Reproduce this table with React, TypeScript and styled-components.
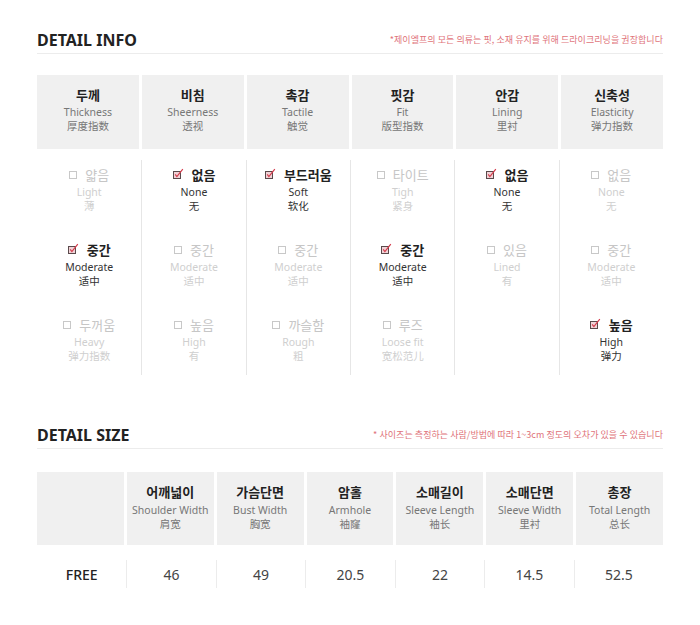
import React from "react";
import styled, { createGlobalStyle } from "styled-components";

const Global = createGlobalStyle`
  html, body { margin: 0; padding: 0; background: #fff; }
  body { font-family: "Noto Sans", "Noto Sans CJK KR", sans-serif; color: #222; }
`;

const Page = styled.div`
  width: 626px;
  padding: 30px 37px 0;
`;

const Section = styled.section<{ $top?: number }>`
  margin-top: ${(p) => p.$top ?? 0}px;
`;

const TitleRow = styled.div`
  display: flex;
  justify-content: space-between;
  align-items: center;
  padding-bottom: 3px;
  border-bottom: 1px solid #ececec;
`;

const Title = styled.h2`
  margin: 0;
  font-family: "Noto Sans", sans-serif;
  font-size: 16px;
  line-height: 20px;
  font-weight: 700;
  color: #222;
`;

const Note = styled.span`
  font-family: "Noto Sans CJK KR", "Noto Sans", sans-serif;
  font-size: 9px;
  letter-spacing: 0.05px;
  color: #e0737a;
  line-height: 12px;
`;

const HeadGrid = styled.div<{ $cols: number; $top: number; $h: number }>`
  display: grid;
  grid-template-columns: repeat(${(p) => p.$cols}, 1fr);
  column-gap: 3px;
  margin-top: ${(p) => p.$top}px;
  height: ${(p) => p.$h}px;
`;

const HeadCell = styled.div<{ $pt: number }>`
  background: #f0f0f0;
  display: flex;
  flex-direction: column;
  align-items: center;
  padding-top: ${(p) => p.$pt}px;
`;

const HeadKo = styled.div`
  font-family: "Noto Sans CJK KR", sans-serif;
  font-size: 13px;
  font-weight: 700;
  line-height: 18px;
  color: #222;
`;

const HeadEn = styled.div<{ $mt: number }>`
  font-family: "Noto Sans", sans-serif;
  font-size: 10.5px;
  line-height: 14px;
  margin-top: ${(p) => p.$mt}px;
  color: #777;
`;

const HeadZh = styled.div`
  font-family: "Noto Sans CJK SC", sans-serif;
  font-size: 10.5px;
  line-height: 14px;
  color: #777;
`;

const BodyGrid = styled.div`
  display: grid;
  grid-template-columns: repeat(6, 1fr);
  margin-top: 11px;
`;

const Column = styled.div`
  display: flex;
  flex-direction: column;
  align-items: center;
  gap: 29px;
  padding: 6px 0 13px;
  & + & { border-left: 1px solid #e6e6e6; }
`;

const Option = styled.div`
  height: 46px;
  display: flex;
  flex-direction: column;
  align-items: center;
`;

const OptKo = styled.div<{ $on: boolean }>`
  display: flex;
  align-items: center;
  gap: 8px;
  font-family: "Noto Sans CJK KR", sans-serif;
  font-size: 13px;
  line-height: 18px;
  font-weight: ${(p) => (p.$on ? 700 : 400)};
  color: ${(p) => (p.$on ? "#222" : "#c6c6c6")};
`;

const OptEn = styled.div<{ $on: boolean }>`
  font-family: "Noto Sans", sans-serif;
  font-size: 10.5px;
  line-height: 13px;
  margin-top: 2px;
  color: ${(p) => (p.$on ? "#333" : "#cfcfcf")};
`;

const OptZh = styled.div<{ $on: boolean }>`
  font-family: "Noto Sans CJK SC", sans-serif;
  font-size: 10.5px;
  line-height: 13px;
  color: ${(p) => (p.$on ? "#333" : "#cfcfcf")};
`;

const EmptyBox = styled.span`
  width: 6px;
  height: 6px;
  border: 1px solid #c8c8c8;
  display: inline-block;
`;

const CheckSvg = styled.svg`
  display: block;
  margin-top: -3px;
`;

const Checked = () => (
  <CheckSvg width="11" height="11" viewBox="0 0 11 11">
    <rect x="0.5" y="3.5" width="7" height="7" fill="#f1d3d7" stroke="#5a4a4c" />
    <path d="M2.2 6.3 L3.9 8.6 L9.8 1.2" fill="none" stroke="#d43c4c" strokeWidth="1.2" />
  </CheckSvg>
);

const DataGrid = styled.div`
  display: grid;
  grid-template-columns: repeat(7, 1fr);
  margin-top: 15px;
`;

const DataCell = styled.div<{ $strong?: boolean }>`
  height: 28px;
  display: flex;
  align-items: center;
  justify-content: center;
  font-family: "Noto Sans", sans-serif;
  font-size: 14px;
  font-weight: ${(p) => (p.$strong ? 500 : 400)};
  color: ${(p) => (p.$strong ? "#222" : "#444")};
  & + & { border-left: 1px solid #ececec; }
`;

type Opt = { ko: string; en: string; zh: string; on?: boolean } | null;

const infoHeads = [
  ["두께", "Thickness", "厚度指数"],
  ["비침", "Sheerness", "透视"],
  ["촉감", "Tactile", "触觉"],
  ["핏감", "Fit", "版型指数"],
  ["안감", "Lining", "里衬"],
  ["신축성", "Elasticity", "弹力指数"],
];

const infoCols: Opt[][] = [
  [
    { ko: "얇음", en: "Light", zh: "薄" },
    { ko: "중간", en: "Moderate", zh: "适中", on: true },
    { ko: "두꺼움", en: "Heavy", zh: "弹力指数" },
  ],
  [
    { ko: "없음", en: "None", zh: "无", on: true },
    { ko: "중간", en: "Moderate", zh: "适中" },
    { ko: "높음", en: "High", zh: "有" },
  ],
  [
    { ko: "부드러움", en: "Soft", zh: "软化", on: true },
    { ko: "중간", en: "Moderate", zh: "适中" },
    { ko: "까슬함", en: "Rough", zh: "粗" },
  ],
  [
    { ko: "타이트", en: "Tigh", zh: "紧身" },
    { ko: "중간", en: "Moderate", zh: "适中", on: true },
    { ko: "루즈", en: "Loose fit", zh: "宽松范儿" },
  ],
  [
    { ko: "없음", en: "None", zh: "无", on: true },
    { ko: "있음", en: "Lined", zh: "有" },
    null,
  ],
  [
    { ko: "없음", en: "None", zh: "无" },
    { ko: "중간", en: "Moderate", zh: "适中" },
    { ko: "높음", en: "High", zh: "弹力", on: true },
  ],
];

const sizeHeads = [
  ["어깨넓이", "Shoulder Width", "肩宽"],
  ["가슴단면", "Bust Width", "胸宽"],
  ["암홀", "Armhole", "袖窿"],
  ["소매길이", "Sleeve Length", "袖长"],
  ["소매단면", "Sleeve Width", "里衬"],
  ["총장", "Total Length", "总长"],
];

const sizeData = ["46", "49", "20.5", "22", "14.5", "52.5"];

export default function App() {
  return (
    <>
      <Global />
      <Page>
        <Section>
          <TitleRow>
            <Title>DETAIL INFO</Title>
            <Note>*제이엘프의 모든 의류는 핏, 소재 유지를 위해 드라이크리닝을 권장합니다</Note>
          </TitleRow>
          <HeadGrid $cols={6} $top={21} $h={74}>
            {infoHeads.map(([ko, en, zh]) => (
              <HeadCell key={en} $pt={11}>
                <HeadKo>{ko}</HeadKo>
                <HeadEn $mt={1}>{en}</HeadEn>
                <HeadZh>{zh}</HeadZh>
              </HeadCell>
            ))}
          </HeadGrid>
          <BodyGrid>
            {infoCols.map((col, i) => (
              <Column key={i}>
                {col.map((o, j) => (
                  <Option key={j}>
                    {o && (
                      <>
                        <OptKo $on={!!o.on}>
                          {o.on ? <Checked /> : <EmptyBox />}
                          {o.ko}
                        </OptKo>
                        <OptEn $on={!!o.on}>{o.en}</OptEn>
                        <OptZh $on={!!o.on}>{o.zh}</OptZh>
                      </>
                    )}
                  </Option>
                ))}
              </Column>
            ))}
          </BodyGrid>
        </Section>

        <Section $top={50}>
          <TitleRow>
            <Title>DETAIL SIZE</Title>
            <Note>* 사이즈는 측정하는 사람/방법에 따라 1~3cm 정도의 오차가 있을 수 있습니다</Note>
          </TitleRow>
          <HeadGrid $cols={7} $top={23} $h={73}>
            <HeadCell $pt={11} />
            {sizeHeads.map(([ko, en, zh]) => (
              <HeadCell key={en} $pt={11}>
                <HeadKo>{ko}</HeadKo>
                <HeadEn $mt={2}>{en}</HeadEn>
                <HeadZh>{zh}</HeadZh>
              </HeadCell>
            ))}
          </HeadGrid>
          <DataGrid>
            <DataCell $strong>FREE</DataCell>
            {sizeData.map((d, i) => (
              <DataCell key={i}>{d}</DataCell>
            ))}
          </DataGrid>
        </Section>
      </Page>
    </>
  );
}
